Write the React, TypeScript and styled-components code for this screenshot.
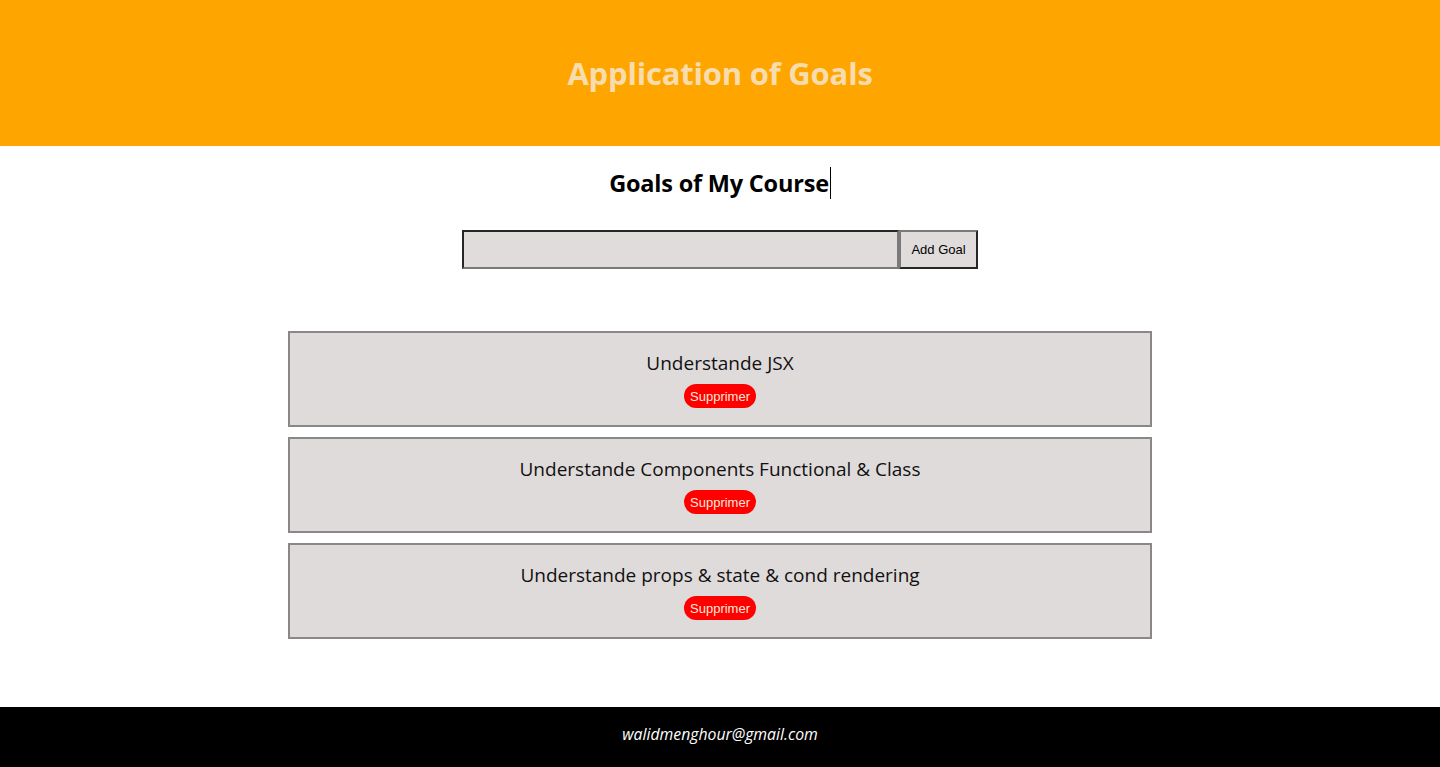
import React, { useState } from "react";
import styled, { createGlobalStyle } from "styled-components";

const GlobalStyle = createGlobalStyle`
  html, body {
    margin: 0;
    padding: 0;
    background: #ffffff;
    font-family: "Open Sans", "Noto Sans", sans-serif;
  }
`;

const Page = styled.div`
  display: flex;
  flex-direction: column;
  min-height: 767px;
`;

const Header = styled.header`
  height: 146px;
  background: #ffa500;
  display: flex;
  align-items: center;
  justify-content: center;
`;

const HeaderTitle = styled.h1`
  margin: 0;
  font-size: 31px;
  font-weight: 700;
  color: #f7dcae;
  letter-spacing: -0.2px;
`;

const Main = styled.main`
  flex: 1;
  display: flex;
  flex-direction: column;
  align-items: center;
  padding-top: 19px;
`;

const SectionTitle = styled.h2`
  margin: 0;
  height: 36px;
  display: flex;
  align-items: center;
  font-size: 23.5px;
  font-weight: 700;
  color: #000;
  letter-spacing: -0.2px;
`;

const Caret = styled.span`
  display: inline-block;
  width: 1px;
  height: 32px;
  background: #000;
  margin-left: 1px;
`;

const Form = styled.form`
  display: flex;
  margin-top: 29px;
`;

const GoalInput = styled.input`
  width: 437px;
  height: 39px;
  box-sizing: border-box;
  background: #e0dcdc;
  border: 2px solid;
  border-color: #262626 #7a7a7a #7a7a7a #262626;
  outline: none;
  padding: 0 6px;
  font-size: 14px;
`;

const AddButton = styled.button`
  width: 79px;
  height: 39px;
  box-sizing: border-box;
  background: #e0dcdc;
  border: 2px solid;
  border-color: #7a7a7a #262626 #262626 #7a7a7a;
  font-family: "Liberation Sans", Arial, sans-serif;
  font-size: 13px;
  color: #000;
  padding: 0;
  cursor: pointer;
`;

const List = styled.ul`
  list-style: none;
  margin: 62px 0 0;
  padding: 0;
  display: flex;
  flex-direction: column;
  gap: 10px;
`;

const Item = styled.li`
  width: 864px;
  height: 96px;
  box-sizing: border-box;
  background: #e0dbdb;
  border: 2px solid #898787;
  display: flex;
  flex-direction: column;
  align-items: center;
  padding-top: 16px;
`;

const ItemText = styled.span`
  font-size: 19px;
  color: #111;
  line-height: 28px;
`;

const DeleteButton = styled.button`
  margin-top: 7px;
  height: 24px;
  padding: 0 6px;
  border: none;
  border-radius: 12px;
  background: #ff0000;
  color: #fbe9d8;
  font-family: "Liberation Sans", Arial, sans-serif;
  font-size: 13px;
  cursor: pointer;
`;

const Footer = styled.footer`
  height: 60px;
  background: #000;
  display: flex;
  align-items: center;
  justify-content: center;
`;

const Email = styled.span`
  color: #fff;
  font-style: italic;
  font-size: 15.8px;
  line-height: 20px;
  margin-top: -6px;
`;

const initialGoals = [
  { id: 1, text: "Understande JSX" },
  { id: 2, text: "Understande Components Functional & Class" },
  { id: 3, text: "Understande props & state & cond rendering" },
];

export default function App() {
  const [goals, setGoals] = useState(initialGoals);
  const [value, setValue] = useState("");

  const addGoal = (e: React.FormEvent) => {
    e.preventDefault();
    if (!value.trim()) return;
    setGoals([...goals, { id: Date.now(), text: value }]);
    setValue("");
  };

  return (
    <>
      <GlobalStyle />
      <Page>
        <Header>
          <HeaderTitle>Application of Goals</HeaderTitle>
        </Header>
        <Main>
          <SectionTitle>
            Goals of My Course
            <Caret />
          </SectionTitle>
          <Form onSubmit={addGoal}>
            <GoalInput value={value} onChange={e => setValue(e.target.value)} />
            <AddButton type="submit">Add Goal</AddButton>
          </Form>
          <List>
            {goals.map(goal => (
              <Item key={goal.id}>
                <ItemText>{goal.text}</ItemText>
                <DeleteButton onClick={() => setGoals(goals.filter(g => g.id !== goal.id))}>Supprimer</DeleteButton>
              </Item>
            ))}
          </List>
        </Main>
        <Footer>
          <Email>walidmenghour@gmail.com</Email>
        </Footer>
      </Page>
    </>
  );
}
